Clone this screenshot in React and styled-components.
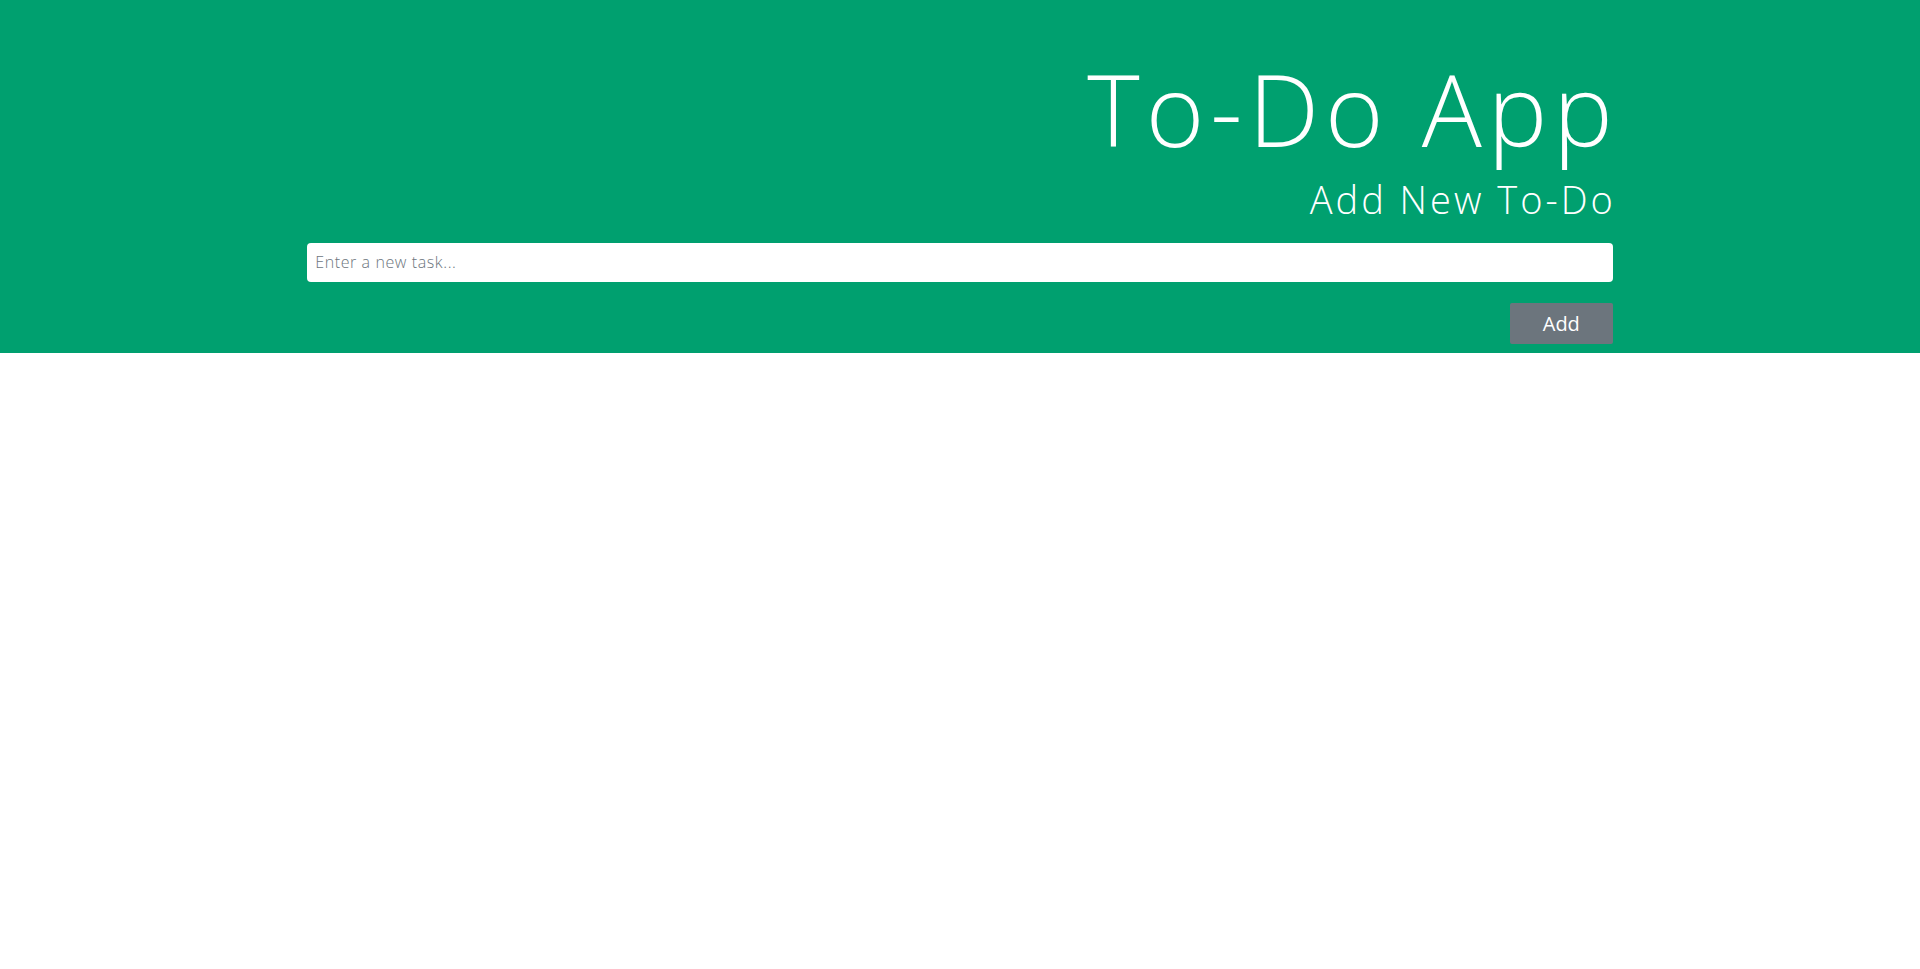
import React from "react";
import styled, { createGlobalStyle } from "styled-components";

const Global = createGlobalStyle`
  html, body { margin: 0; padding: 0; background: #ffffff; }
  body { font-family: "Open Sans", "Liberation Sans", sans-serif; }
  * { box-sizing: border-box; }
`;

const Header = styled.header`
  background: #00a06f;
  height: 353px;
`;

const Container = styled.div`
  width: 68%;
  margin: 0 auto;
  display: flex;
  flex-direction: column;
  align-items: flex-end;
`;

const Title = styled.h1`
  margin: 0;
  padding-top: 58px;
  font-size: 100px;
  font-weight: 300;
  line-height: 1;
  color: #ffffff;
  letter-spacing: 6px;
  margin-right: -6px;
`;

const Subtitle = styled.h2`
  margin: 0;
  padding-top: 19px;
  font-size: 38px;
  font-weight: 300;
  line-height: 1.2;
  color: #ffffff;
  letter-spacing: 3px;
  margin-right: -3px;
`;

const Form = styled.form`
  width: 100%;
  display: flex;
  flex-direction: column;
  align-items: flex-end;
  gap: 21px;
  margin-top: 20px;
`;

const Input = styled.input`
  width: 100%;
  height: 39px;
  border: none;
  border-radius: 4px;
  padding: 0 8px;
  font-family: inherit;
  font-size: 16px;
  font-weight: 300;
  letter-spacing: 0.6px;
  color: #333;
  background: #fff;
  outline: none;
  &::placeholder { color: #6c757d; }
`;

const Button = styled.button`
  width: 103px;
  height: 41px;
  border: none;
  border-radius: 2px;
  background: #6c757d;
  color: #fff;
  font-family: inherit;
  font-size: 20px;
  font-weight: 400;
  cursor: pointer;
`;

export default function App() {
  return (
    <>
      <Global />
      <Header>
        <Container>
          <Title>To-Do App</Title>
          <Subtitle>Add New To-Do</Subtitle>
          <Form onSubmit={(e) => e.preventDefault()}>
            <Input type="text" placeholder="Enter a new task..." />
            <Button type="submit">Add</Button>
          </Form>
        </Container>
      </Header>
    </>
  );
}
